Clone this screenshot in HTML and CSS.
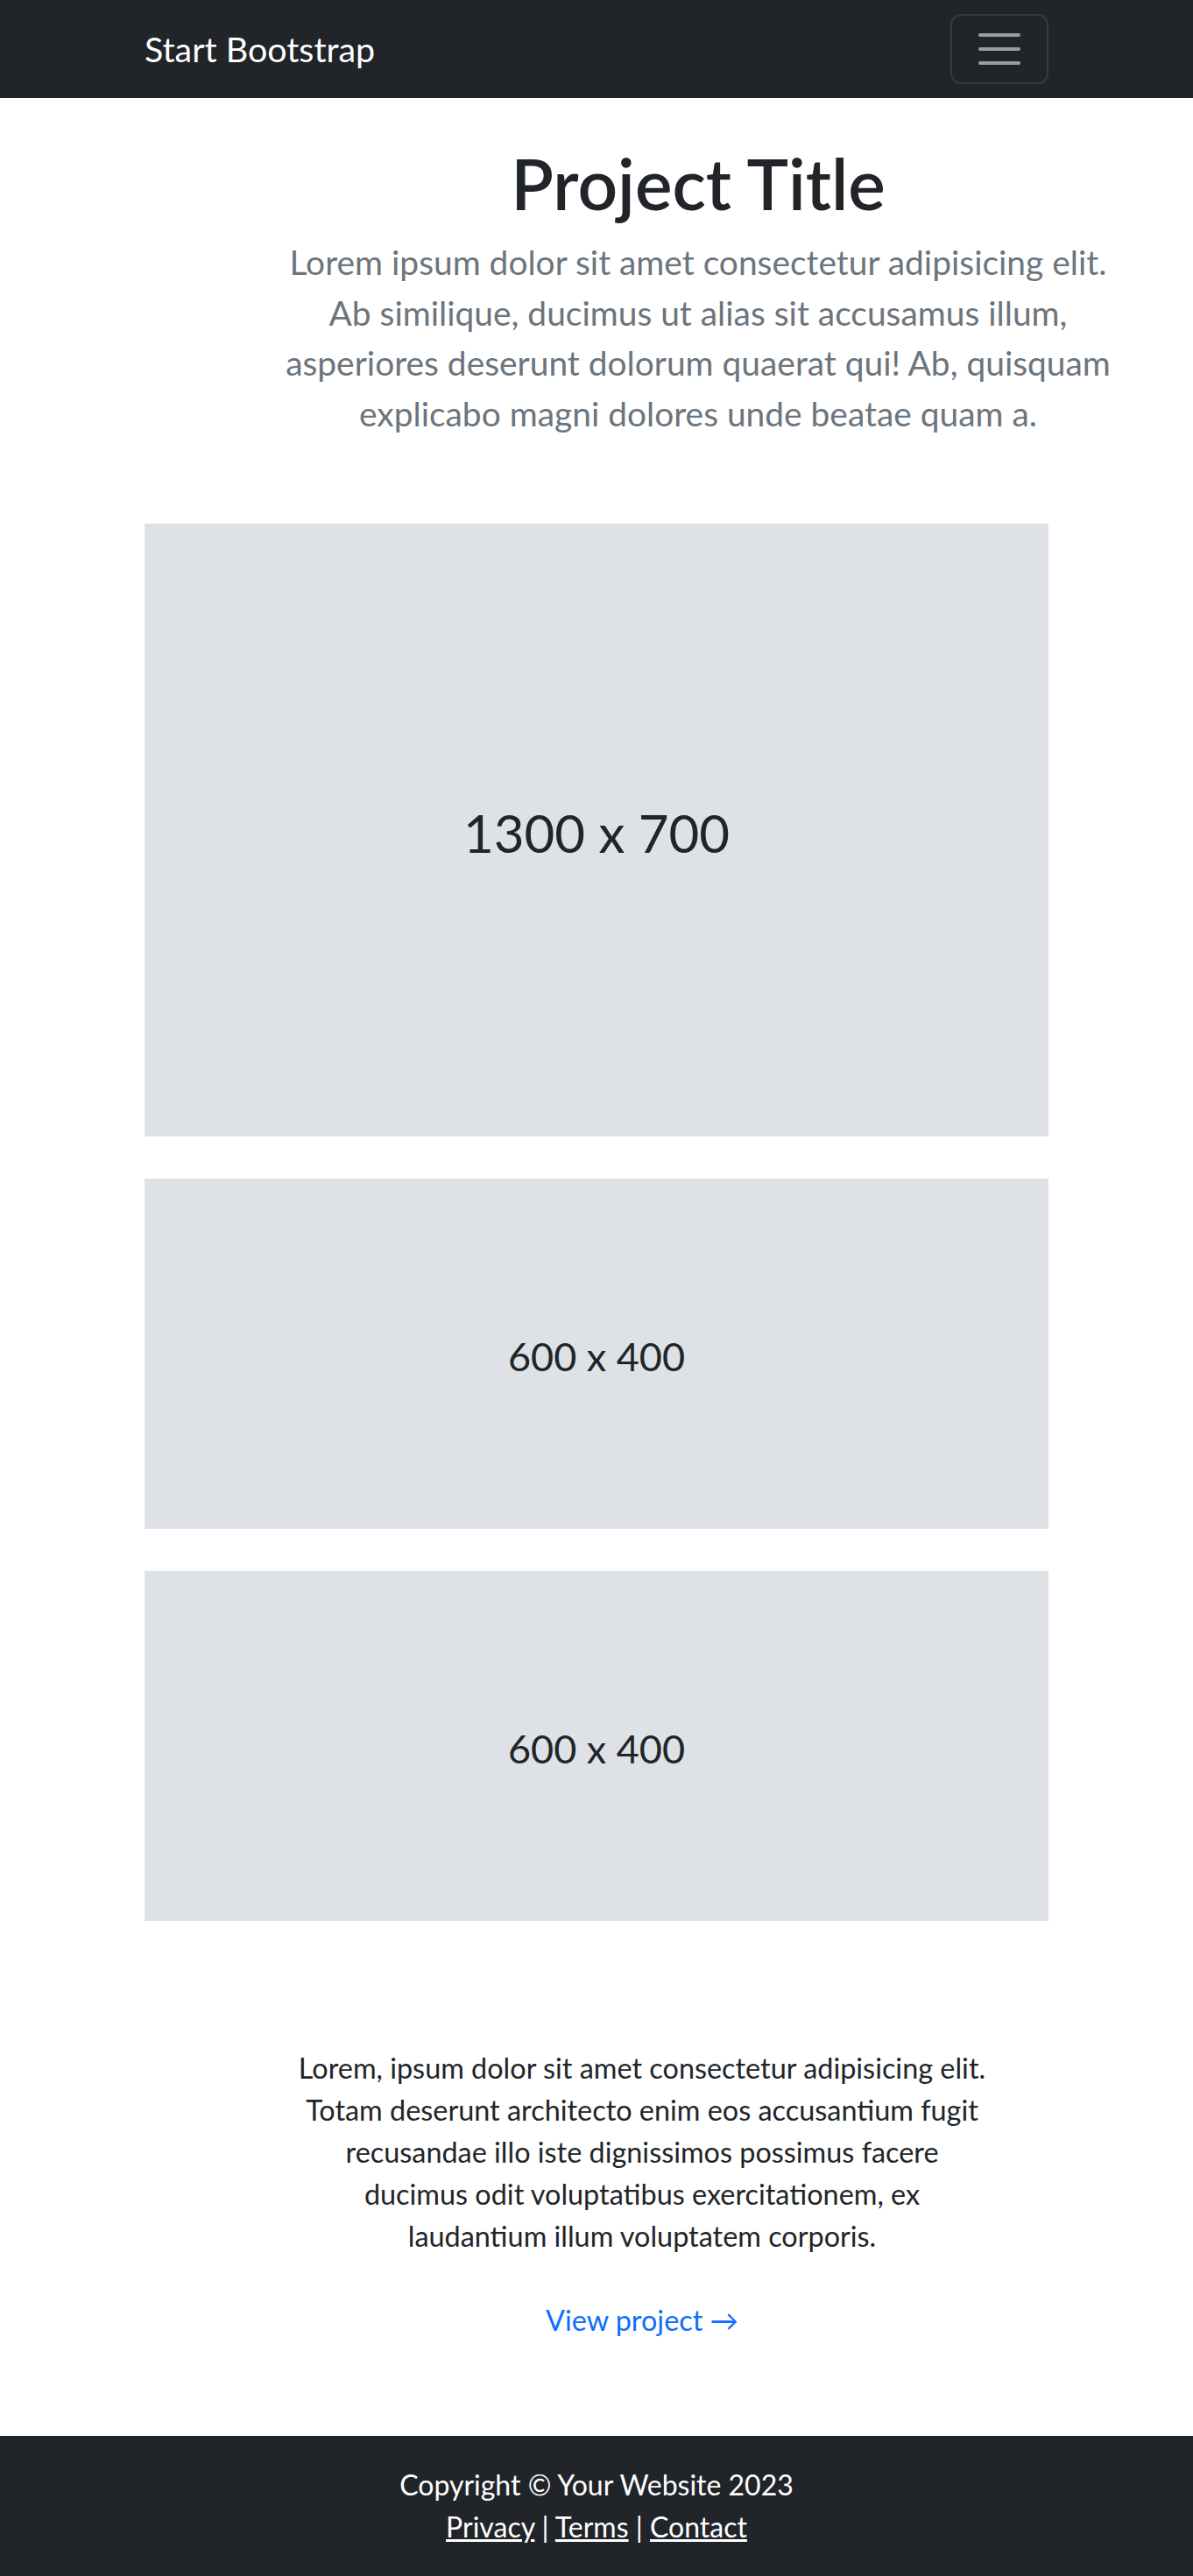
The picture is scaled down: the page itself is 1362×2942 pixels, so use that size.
FILE: index.html
```html
<!DOCTYPE html>
<html lang="en">
<head>
  <meta charset="UTF-8" />
  <title>Project - Start Bootstrap</title>
  <link rel="stylesheet" href="styles.css">
</head>
<body>
  <nav class="navbar">
    <div class="container nav-inner">
      <a class="brand" href="#">Start Bootstrap</a>
      <button class="toggler" type="button" aria-label="Toggle navigation">
        <svg class="toggler-icon" viewBox="0 0 30 30" width="60" height="60">
          <path d="M4 7h22M4 15h22M4 23h22" stroke="rgba(255,255,255,0.55)" stroke-width="2" stroke-linecap="round" stroke-miterlimit="10" fill="none"/>
        </svg>
      </button>
    </div>
  </nav>

  <header class="intro">
    <h1 class="title">Project Title</h1>
    <p class="lead">Lorem ipsum dolor sit amet consectetur adipisicing elit. Ab similique, ducimus ut alias sit accusamus illum, asperiores deserunt dolorum quaerat qui! Ab, quisquam explicabo magni dolores unde beatae quam a.</p>
  </header>

  <main class="container gallery">
    <div class="placeholder big"><span>1300 x 700</span></div>
    <div class="placeholder small"><span>600 x 400</span></div>
    <div class="placeholder small"><span>600 x 400</span></div>
  </main>

  <section class="details">
    <p>Lorem, ipsum dolor sit amet consectetur adipisicing elit. Totam deserunt architecto enim eos accusantium fugit recusandae illo iste dignissimos possimus facere ducimus odit voluptatibus exercitationem, ex laudantium illum voluptatem corporis.</p>
    <a class="view-link" href="#">View project →</a>
  </section>

  <footer class="footer">
    <div>Copyright © Your Website 2023</div>
    <div class="footer-links">
      <a href="#">Privacy</a> | <a href="#">Terms</a> | <a href="#">Contact</a>
    </div>
  </footer>
</body>
</html>
```

FILE: styles.css
```css
html, body {
  margin: 0;
  padding: 0;
}

body {
  font-family: 'Lato', 'Liberation Sans', sans-serif;
  font-size: 32px;
  line-height: 1.5;
  color: #212529;
  background: #fff;
}

.container {
  width: 1032px;
  margin: 0 auto;
}

/* navbar */
.navbar {
  background: #212529;
  padding: 16px 0;
}

.nav-inner {
  display: flex;
  align-items: center;
  justify-content: space-between;
}

.brand {
  color: #fff;
  text-decoration: none;
  font-size: 39.4px;
  line-height: 60px;
  padding: 10px 0;
}

.toggler {
  display: flex;
  align-items: center;
  justify-content: center;
  width: 112px;
  height: 80px;
  padding: 8px 24px;
  background: transparent;
  border: 2px solid rgba(255, 255, 255, 0.1);
  border-radius: 12px;
  cursor: pointer;
}

.toggler-icon {
  display: block;
}

/* header */
.intro {
  width: 970px;
  margin: 49px 0 0 312px;
  text-align: center;
}

.title {
  margin: 0 0 14px;
  font-size: 80px;
  font-weight: 600;
  line-height: 96px;
  color: #212529;
}

.lead {
  margin: 0 0 97px;
  font-size: 38.9px;
  line-height: 57.6px;
  color: #6c757d;
}

/* placeholders */
.gallery {
  display: flex;
  flex-direction: column;
  gap: 48px;
}

.placeholder {
  display: flex;
  align-items: center;
  justify-content: center;
  background: #dee2e6;
  color: #212529;
}

.placeholder span {
  padding-top: 6px;
}

.placeholder.big {
  height: 700px;
  font-size: 60px;
}

.placeholder.small {
  height: 400px;
  font-size: 45px;
}

/* project details */
.details {
  width: 792px;
  margin: 144px 0 0 337px;
  text-align: center;
}

.details p {
  margin: 0 0 48px;
  font-size: 32.4px;
  line-height: 48px;
}

.view-link {
  display: inline-block;
  font-size: 32.4px;
  line-height: 48px;
  color: #0d6efd;
  text-decoration: none;
}

/* footer */
.footer {
  margin-top: 108px;
  padding: 32px 0;
  background: #212529;
  color: #fff;
  text-align: center;
  font-size: 32px;
  line-height: 48px;
}

.footer-links a {
  color: #fff;
  text-decoration: underline;
}
```
